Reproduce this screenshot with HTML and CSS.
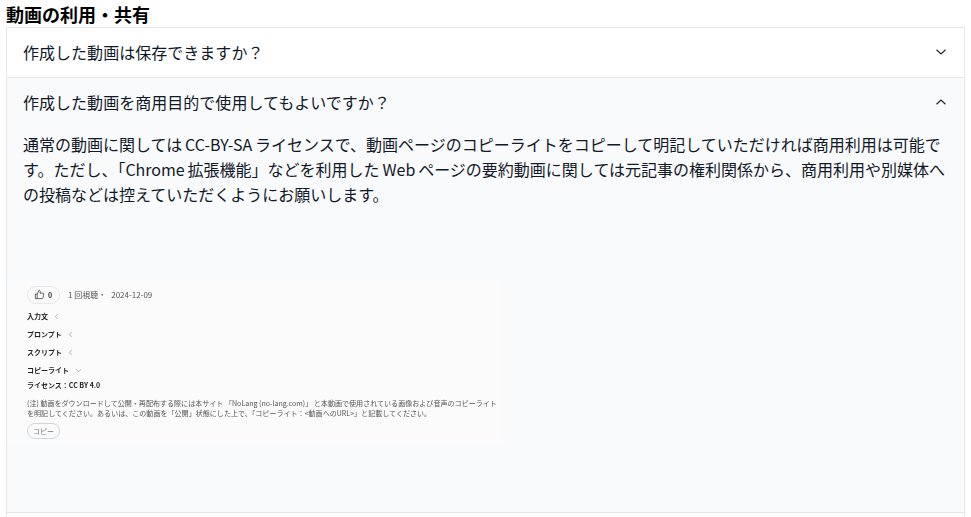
FILE: index.html
```html
<!DOCTYPE html>
<html lang="ja">
<head>
<meta charset="utf-8">
<title>動画の利用・共有</title>
<link rel="stylesheet" href="styles.css">
</head>
<body>
<h2 class="title">動画の利用・共有</h2>
<div class="accordion">
  <div class="item">
    <div class="question">
      <span>作成した動画は保存できますか？</span>
      <svg class="chev" viewBox="0 0 12 8" width="12" height="8"><path d="M1.5 1.8 6 6 10.5 1.8" fill="none" stroke="#1f2937" stroke-width="1.2"/></svg>
    </div>
  </div>
  <div class="item open">
    <div class="question">
      <span>作成した動画を商用目的で使用してもよいですか？</span>
      <svg class="chev" viewBox="0 0 12 8" width="12" height="8"><path d="M1.5 6.2 6 2 10.5 6.2" fill="none" stroke="#1f2937" stroke-width="1.2"/></svg>
    </div>
    <div class="answer">
      <p class="answer-text">通常の動画に関しては CC-BY-SA ライセンスで、動画ページのコピーライトをコピーして明記していただければ商用利用は可能です。ただし、「Chrome 拡張機能」などを利用した Web ページの要約動画に関しては元記事の権利関係から、商用利用や別媒体への投稿などは控えていただくようにお願いします。</p>
      <div class="shot">
        <div class="meta">
          <span class="like">
            <svg viewBox="0 0 12 12" width="11" height="11"><path d="M1.5 5.5h2v5h-2zM3.5 5.5 5.5 1.5c1 0 1.5.7 1.3 1.6L6.5 4.5h3.2c.7 0 1 .6.9 1.2l-.8 4c-.1.5-.5.8-1 .8H3.5" fill="none" stroke="#333" stroke-width=".8"/></svg>
            <b>0</b>
          </span>
          <span>1 回視聴・</span>
          <span class="date">2024-12-09</span>
        </div>
        <div class="fold"><b>入力文</b><svg viewBox="0 0 6 8" width="5" height="7"><path d="M4.5 1 1.5 4l3 3" fill="none" stroke="#888" stroke-width=".8"/></svg></div>
        <div class="fold"><b>プロンプト</b><svg viewBox="0 0 6 8" width="5" height="7"><path d="M4.5 1 1.5 4l3 3" fill="none" stroke="#888" stroke-width=".8"/></svg></div>
        <div class="fold"><b>スクリプト</b><svg viewBox="0 0 6 8" width="5" height="7"><path d="M4.5 1 1.5 4l3 3" fill="none" stroke="#888" stroke-width=".8"/></svg></div>
        <div class="fold"><b>コピーライト</b><svg viewBox="0 0 8 6" width="7" height="5"><path d="M1 1.5l3 3 3-3" fill="none" stroke="#888" stroke-width=".8"/></svg></div>
        <div class="license">ライセンス：CC BY 4.0</div>
        <p class="note">(注) 動画をダウンロードして公開・再配布する際には本サイト 「NoLang (no-lang.com)」 と本動画で使用されている画像および音声のコピーライトを明記してください。あるいは、この動画を「公開」状態にした上で、「コピーライト：&lt;動画へのURL&gt;」と記載してください。</p>
        <span class="copy">コピー</span>
      </div>
    </div>
  </div>
</div>
</body>
</html>
```

FILE: styles.css
```css
html, body {
  margin: 0;
  padding: 0;
  background: #fff;
  overflow: hidden;
}
body {
  height: 517px;
  padding: 0 6px;
  font-family: "Noto Sans CJK JP", "Noto Sans", sans-serif;
  color: #111827;
}
.title {
  margin: 0;
  height: 27px;
  font-size: 18px;
  line-height: 29px;
  font-weight: 700;
  color: #000;
}
.accordion {
  border: 1px solid #e5e7eb;
  border-bottom: 0;
  width: 957px;
  height: 489px;
}
.item {
  border-bottom: 1px solid #e5e7eb;
}
.question {
  height: 49px;
  padding: 0 17px 2px 16px;
  box-sizing: border-box;
  display: flex;
  align-items: center;
  justify-content: space-between;
  font-size: 16px;
  letter-spacing: 0.03px;
}
.open {
  background: #f9fafb;
  height: 434px;
}
.answer {
  padding: 5px 12px 0 16px;
}
.answer-text {
  margin: 0;
  font-size: 16px;
  line-height: 25px;
  word-spacing: -0.7px;
}
.shot {
  margin: 73px 0 0 -16px;
  padding: 5px 0 5px 20px;
  width: 475px;
  background: #fbfbfc;
  font-size: 7px;
  color: #444;
  filter: blur(0.45px);
}
.meta {
  display: flex;
  align-items: center;
  gap: 8px;
  height: 19px;
  font-size: 8px;
  color: #555;
}
.date {
  margin-left: -3px;
}
.like {
  display: flex;
  align-items: center;
  gap: 3px;
  box-sizing: border-box;
  width: 33px;
  height: 18px;
  padding-left: 6px;
  border: 1px solid #e5e7eb;
  border-radius: 9px;
  color: #333;
  font-size: 7px;
}
.fold {
  display: flex;
  align-items: center;
  gap: 6px;
  height: 18px;
  color: #222;
  font-size: 7px;
}
.meta + .fold {
  margin-top: 3px;
}
.license {
  margin-top: -1px;
  height: 14px;
  line-height: 14px;
  font-size: 7px;
  font-weight: 700;
  color: #222;
}
.note {
  margin: 6px 0 0;
  font-size: 7.05px;
  line-height: 10px;
  color: #555;
  width: 472px;
}
.copy {
  display: block;
  margin-top: 5px;
  box-sizing: border-box;
  width: 33px;
  height: 16px;
  line-height: 14px;
  text-align: center;
  border: 1px solid #d1d5db;
  border-radius: 8px;
  font-size: 7px;
  color: #777;
}
```
